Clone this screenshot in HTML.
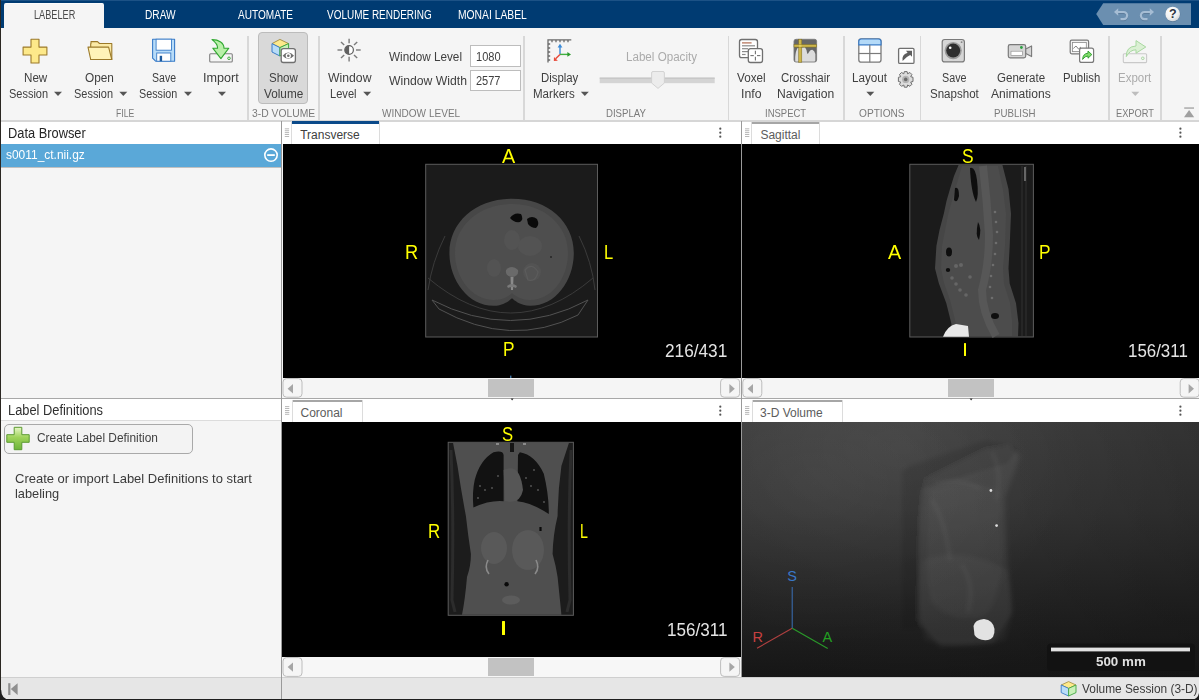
<!DOCTYPE html><html><head><meta charset="utf-8"><style>
html,body{margin:0;padding:0;}
body{width:1199px;height:700px;overflow:hidden;position:relative;background:#f5f5f5;font-family:"Liberation Sans", sans-serif;}
.t{position:absolute;white-space:nowrap;display:block;}
.b{position:absolute;box-sizing:border-box;}
svg{position:absolute;}
</style></head><body>

<div class="b" style="left:0px;top:0px;width:1199px;height:28px;background:#003b72;"></div>
<div class="b" style="left:0px;top:0px;width:1199px;height:1px;background:#1c5286;"></div>
<div class="b" style="left:4px;top:3px;width:100px;height:25px;background:#f5f5f5;border-radius:2px 2px 0 0;border-top:1px solid #fbfbfb;"></div>
<span class="t" style="left:33.75px;top:8.40px;font-size:12px;line-height:14px;color:#4a4a4a;transform:scaleX(0.7635);transform-origin:0 0;font-weight:normal;">LABELER</span>
<span class="t" style="left:144.70px;top:8.40px;font-size:12px;line-height:14px;color:#ffffff;transform:scaleX(0.8449);transform-origin:0 0;font-weight:normal;">DRAW</span>
<span class="t" style="left:238.00px;top:8.40px;font-size:12px;line-height:14px;color:#ffffff;transform:scaleX(0.8390);transform-origin:0 0;font-weight:normal;">AUTOMATE</span>
<span class="t" style="left:327.00px;top:8.40px;font-size:12px;line-height:14px;color:#ffffff;transform:scaleX(0.8312);transform-origin:0 0;font-weight:normal;">VOLUME RENDERING</span>
<span class="t" style="left:458.25px;top:8.40px;font-size:12px;line-height:14px;color:#ffffff;transform:scaleX(0.8591);transform-origin:0 0;font-weight:normal;">MONAI LABEL</span>
<svg style="left:1090px;top:0px" width="109" height="28" viewBox="1090 0 109 28">
<defs><radialGradient id="hg" cx="0.4" cy="0.3" r="0.8"><stop offset="0" stop-color="#ffffff"/><stop offset="0.6" stop-color="#f0f0f0"/><stop offset="1" stop-color="#c8ccd2"/></radialGradient></defs>
<path d="M1096.2 14 L1103.2 3.2 L1191 3.2 L1191 25 L1103.2 25 Z" fill="#6b8fb0"/>
<g fill="none" stroke="#55718e" stroke-width="2.2" opacity="0.6">
<path d="M1117 13 H1123.5 a3.6 3.6 0 0 1 0 7.2 H1120.5"/>
<path d="M1151 13 H1144.5 a3.6 3.6 0 0 0 0 7.2 H1147.5"/>
</g>
<g fill="none" stroke="#a6bdd4" stroke-width="2.2">
<path d="M1117 12 H1123.5 a3.6 3.6 0 0 1 0 7.2 H1120.5"/>
<path d="M1151 12 H1144.5 a3.6 3.6 0 0 0 0 7.2 H1147.5"/>
</g>
<path d="M1114 12 l4.2 -3.8 v7.6 z" fill="#a6bdd4"/>
<path d="M1154 12 l-4.2 -3.8 v7.6 z" fill="#a6bdd4"/>
<circle cx="1172.9" cy="14.6" r="7.4" fill="#4a6480" opacity="0.5"/>
<circle cx="1172.7" cy="14" r="7.3" fill="url(#hg)"/>
<text x="1172.8" y="18.4" font-family="Liberation Sans" font-weight="bold" font-size="12.5" text-anchor="middle" fill="#2e3440">?</text>
</svg>
<div class="b" style="left:0px;top:120px;width:1199px;height:2px;background:#d6d6d6;"></div>
<div class="b" style="left:247.2px;top:36px;width:1.8px;height:84px;background:#d8d8d8;"></div>
<div class="b" style="left:318.2px;top:36px;width:1.8px;height:84px;background:#d8d8d8;"></div>
<div class="b" style="left:523px;top:36px;width:1.8px;height:84px;background:#d8d8d8;"></div>
<div class="b" style="left:727.5px;top:36px;width:1.8px;height:84px;background:#d8d8d8;"></div>
<div class="b" style="left:842.8px;top:36px;width:1.8px;height:84px;background:#d8d8d8;"></div>
<div class="b" style="left:919.5px;top:36px;width:1.8px;height:84px;background:#d8d8d8;"></div>
<div class="b" style="left:1108px;top:36px;width:1.8px;height:84px;background:#d8d8d8;"></div>
<div class="b" style="left:1160.4px;top:36px;width:1.8px;height:84px;background:#d8d8d8;"></div>
<div class="b" style="left:258px;top:32px;width:50px;height:72px;background:#d9d9d9;border:1px solid #bcbcbc;border-radius:4px;"></div>
<span class="t" style="left:23.60px;top:71.00px;font-size:12px;line-height:14px;color:#404040;transform:scaleX(0.9694);transform-origin:0 0;font-weight:normal;">New</span>
<span class="t" style="left:9.40px;top:87.00px;font-size:12px;line-height:14px;color:#404040;transform:scaleX(0.9158);transform-origin:0 0;font-weight:normal;">Session</span>
<span class="t" style="left:85.00px;top:71.00px;font-size:12px;line-height:14px;color:#404040;transform:scaleX(0.9846);transform-origin:0 0;font-weight:normal;">Open</span>
<span class="t" style="left:74.00px;top:87.00px;font-size:12px;line-height:14px;color:#404040;transform:scaleX(0.9134);transform-origin:0 0;font-weight:normal;">Session</span>
<span class="t" style="left:152.00px;top:71.00px;font-size:12px;line-height:14px;color:#404040;transform:scaleX(0.8776);transform-origin:0 0;font-weight:normal;">Save</span>
<span class="t" style="left:138.70px;top:87.00px;font-size:12px;line-height:14px;color:#404040;transform:scaleX(0.8970);transform-origin:0 0;font-weight:normal;">Session</span>
<span class="t" style="left:203.00px;top:71.00px;font-size:12px;line-height:14px;color:#404040;transform:scaleX(1.0498);transform-origin:0 0;font-weight:normal;">Import</span>
<span class="t" style="left:269.10px;top:71.00px;font-size:12px;line-height:14px;color:#404040;transform:scaleX(0.9618);transform-origin:0 0;font-weight:normal;">Show</span>
<span class="t" style="left:263.90px;top:87.00px;font-size:12px;line-height:14px;color:#404040;transform:scaleX(0.9795);transform-origin:0 0;font-weight:normal;">Volume</span>
<span class="t" style="left:327.50px;top:71.00px;font-size:12px;line-height:14px;color:#404040;transform:scaleX(1.0185);transform-origin:0 0;font-weight:normal;">Window</span>
<span class="t" style="left:330.00px;top:87.00px;font-size:12px;line-height:14px;color:#404040;transform:scaleX(0.9271);transform-origin:0 0;font-weight:normal;">Level</span>
<span class="t" style="left:389.40px;top:50.20px;font-size:12px;line-height:14px;color:#404040;transform:scaleX(0.9772);transform-origin:0 0;font-weight:normal;">Window Level</span>
<span class="t" style="left:389.40px;top:74.40px;font-size:12px;line-height:14px;color:#404040;transform:scaleX(1.0171);transform-origin:0 0;font-weight:normal;">Window Width</span>
<span class="t" style="left:540.70px;top:71.00px;font-size:12px;line-height:14px;color:#404040;transform:scaleX(0.9480);transform-origin:0 0;font-weight:normal;">Display</span>
<span class="t" style="left:532.60px;top:87.00px;font-size:12px;line-height:14px;color:#404040;transform:scaleX(0.9623);transform-origin:0 0;font-weight:normal;">Markers</span>
<span class="t" style="left:626.00px;top:50.00px;font-size:12px;line-height:14px;color:#ababab;transform:scaleX(0.9676);transform-origin:0 0;font-weight:normal;">Label Opacity</span>
<span class="t" style="left:736.60px;top:71.00px;font-size:12px;line-height:14px;color:#404040;transform:scaleX(0.9744);transform-origin:0 0;font-weight:normal;">Voxel</span>
<span class="t" style="left:740.70px;top:87.00px;font-size:12px;line-height:14px;color:#404040;transform:scaleX(1.0242);transform-origin:0 0;font-weight:normal;">Info</span>
<span class="t" style="left:781.30px;top:71.00px;font-size:12px;line-height:14px;color:#404040;transform:scaleX(0.9543);transform-origin:0 0;font-weight:normal;">Crosshair</span>
<span class="t" style="left:777.40px;top:87.00px;font-size:12px;line-height:14px;color:#404040;transform:scaleX(1.0106);transform-origin:0 0;font-weight:normal;">Navigation</span>
<span class="t" style="left:852.20px;top:71.00px;font-size:12px;line-height:14px;color:#404040;transform:scaleX(0.9716);transform-origin:0 0;font-weight:normal;">Layout</span>
<span class="t" style="left:941.50px;top:71.00px;font-size:12px;line-height:14px;color:#404040;transform:scaleX(0.8959);transform-origin:0 0;font-weight:normal;">Save</span>
<span class="t" style="left:929.70px;top:87.00px;font-size:12px;line-height:14px;color:#404040;transform:scaleX(0.9623);transform-origin:0 0;font-weight:normal;">Snapshot</span>
<span class="t" style="left:996.70px;top:71.00px;font-size:12px;line-height:14px;color:#404040;transform:scaleX(0.9615);transform-origin:0 0;font-weight:normal;">Generate</span>
<span class="t" style="left:990.80px;top:87.00px;font-size:12px;line-height:14px;color:#404040;transform:scaleX(1.0057);transform-origin:0 0;font-weight:normal;">Animations</span>
<span class="t" style="left:1063.00px;top:71.00px;font-size:12px;line-height:14px;color:#404040;transform:scaleX(0.9451);transform-origin:0 0;font-weight:normal;">Publish</span>
<span class="t" style="left:1118.20px;top:71.00px;font-size:12px;line-height:14px;color:#ababab;transform:scaleX(0.9573);transform-origin:0 0;font-weight:normal;">Export</span>
<span class="t" style="left:115.50px;top:107.20px;font-size:10.5px;line-height:12px;color:#7a7a7a;transform:scaleX(0.8230);transform-origin:0 0;font-weight:normal;">FILE</span>
<span class="t" style="left:251.80px;top:107.20px;font-size:10.5px;line-height:12px;color:#7a7a7a;transform:scaleX(0.9848);transform-origin:0 0;font-weight:normal;">3-D VOLUME</span>
<span class="t" style="left:382.00px;top:107.20px;font-size:10.5px;line-height:12px;color:#7a7a7a;transform:scaleX(0.9574);transform-origin:0 0;font-weight:normal;">WINDOW LEVEL</span>
<span class="t" style="left:605.80px;top:107.20px;font-size:10.5px;line-height:12px;color:#7a7a7a;transform:scaleX(0.9157);transform-origin:0 0;font-weight:normal;">DISPLAY</span>
<span class="t" style="left:765.20px;top:107.20px;font-size:10.5px;line-height:12px;color:#7a7a7a;transform:scaleX(0.9032);transform-origin:0 0;font-weight:normal;">INSPECT</span>
<span class="t" style="left:859.20px;top:107.20px;font-size:10.5px;line-height:12px;color:#7a7a7a;transform:scaleX(0.9649);transform-origin:0 0;font-weight:normal;">OPTIONS</span>
<span class="t" style="left:994.30px;top:107.20px;font-size:10.5px;line-height:12px;color:#7a7a7a;transform:scaleX(0.9237);transform-origin:0 0;font-weight:normal;">PUBLISH</span>
<span class="t" style="left:1116.30px;top:107.20px;font-size:10.5px;line-height:12px;color:#7a7a7a;transform:scaleX(0.8817);transform-origin:0 0;font-weight:normal;">EXPORT</span>
<div class="b" style="left:470px;top:45px;width:50.5px;height:21.5px;background:#fff;border:1px solid #bdbdbd;"></div>
<div class="b" style="left:470px;top:69.6px;width:50.5px;height:21.5px;background:#fff;border:1px solid #bdbdbd;"></div>
<span class="t" style="left:476.00px;top:50.20px;font-size:12px;line-height:14px;color:#404040;transform:scaleX(0.9213);transform-origin:0 0;font-weight:normal;">1080</span>
<span class="t" style="left:475.50px;top:74.40px;font-size:12px;line-height:14px;color:#404040;transform:scaleX(0.9176);transform-origin:0 0;font-weight:normal;">2577</span>
<svg style="left:0;top:0" width="1199" height="125" viewBox="0 0 1199 125">
<!-- New session plus -->
<path d="M31 39.2 h8 v7.9 h7.9 v7.9 h-7.9 v8 h-8 v-8 h-7.9 v-7.9 h7.9 z" fill="#fde98a" stroke="#9c7a2a" stroke-width="1.1" stroke-linejoin="round"/>
<!-- folder -->
<path d="M90.7 59.5 V43.5 h0.3 v-1.9 h6.5 l2 1.9 h12.3 v16 z" fill="#fbeaa6" stroke="#9c7a2a" stroke-width="1.1" stroke-linejoin="round"/>
<path d="M88 47.1 H108.6 L111.8 59.5 H90.7 Z" fill="#fff3b8" stroke="#9c7a2a" stroke-width="1.1" stroke-linejoin="round"/>
<!-- floppy -->
<path d="M152.6 39.2 H174.6 V61.2 H155.6 L152.6 58.2 Z" fill="#b8dcf8" stroke="#3a7cc8" stroke-width="1.1" stroke-linejoin="round"/>
<rect x="156.1" y="39.2" width="15.4" height="11" fill="#ffffff" stroke="#3a7cc8" stroke-width="0.9"/>
<rect x="156.7" y="53" width="14.1" height="8.2" fill="#ffffff" stroke="#3a7cc8" stroke-width="0.9"/>
<rect x="159.7" y="55.8" width="2.4" height="5.4" fill="#1d5a9c"/>
<!-- import -->
<rect x="209.7" y="53.7" width="22.6" height="8.3" rx="1" fill="#f5f5f5" stroke="#808080" stroke-width="1.1"/>
<circle cx="229" cy="58.3" r="1.3" fill="none" stroke="#40b040" stroke-width="1"/>
<path d="M212 39.6 C219 39.6 224 43 224 48.2 H228.8 L220.9 58.6 L212.8 48.2 H217.6 C217.6 44.6 215.5 42 212 39.6 Z" fill="#b8f0a8" stroke="#30a830" stroke-width="1.1" stroke-linejoin="round"/>
<!-- show volume cube + eye -->
<path d="M279.9 39.4 L288.6 43.6 L279.9 47.6 L272 43.6 Z" fill="#fde98a" stroke="#a08a40" stroke-width="0.9" stroke-linejoin="round"/>
<path d="M272 43.6 L279.9 47.6 V56 L272 52 Z" fill="#b8dcf8" stroke="#3a7cc8" stroke-width="1" stroke-linejoin="round"/>
<path d="M288.6 43.6 L279.9 47.6 V56 L288.6 52 Z" fill="#c8f0b8" stroke="#40a840" stroke-width="1" stroke-linejoin="round"/>
<rect x="281.2" y="48.6" width="14.2" height="13.9" rx="2.2" fill="#ffffff" stroke="#707070" stroke-width="1.3"/>
<path d="M282.6 55.7 Q288.2 49.4 294 55.7 Q288.2 62 282.6 55.7 Z" fill="#6e6e6e"/>
<circle cx="288.3" cy="55.7" r="2.6" fill="#ffffff"/>
<circle cx="288.3" cy="55.7" r="1.3" fill="#6e6e6e"/>
<!-- sun contrast -->
<g stroke="#7a7a7a" stroke-width="1.4" stroke-linecap="butt">
<line x1="349.1" y1="38.8" x2="349.1" y2="43.2"/><line x1="349.1" y1="56.8" x2="349.1" y2="61.4"/>
<line x1="337.5" y1="50" x2="342.2" y2="50"/><line x1="356" y1="50" x2="360.7" y2="50"/>
<line x1="341" y1="41.9" x2="344.2" y2="45.1"/><line x1="354" y1="54.9" x2="357.2" y2="58.1"/>
<line x1="357.2" y1="41.9" x2="354" y2="45.1"/><line x1="344.2" y1="54.9" x2="341" y2="58.1"/>
</g>
<circle cx="349.1" cy="50" r="4.3" fill="#ffffff" stroke="#606060" stroke-width="1.2"/>
<path d="M349.1 45.7 A4.3 4.3 0 0 0 349.1 54.3 Z" fill="#606060"/>
<!-- display markers -->
<g fill="none" stroke="#6a6a6a" stroke-width="1.3">
<path d="M548 62.6 V39.9 H571.3"/>
<path d="M552 40 v2.2 M556 40 v2.2 M560 40 v2.2 M564 40 v2.2 M568 40 v2.2"/>
<path d="M548 44 h2.2 M548 48 h2.2 M548 52 h2.2 M548 56 h2.2 M548 60 h2.2"/>
</g>
<line x1="560" y1="54.4" x2="560" y2="46" stroke="#3a8ad8" stroke-width="1.4"/>
<path d="M557.6 47.4 L560 43.8 L562.4 47.4 Z" fill="#3a8ad8"/>
<line x1="560" y1="54.4" x2="568.6" y2="54.4" stroke="#40b040" stroke-width="1.4"/>
<path d="M567.4 52 L571 54.4 L567.4 56.8 Z" fill="#2a9a2a"/>
<line x1="560" y1="54.4" x2="555.6" y2="58.8" stroke="#e84a3a" stroke-width="1.4"/>
<path d="M554 57 L553.8 61 L557.8 60.8 Z" fill="#e84a3a"/>
<!-- slider -->
<rect x="599.7" y="77.6" width="115" height="5.6" fill="#d4d4d4"/>
<rect x="599.7" y="77.6" width="115" height="1.2" fill="#c4c4c4"/>
<path d="M651.6 73 Q651.6 71.5 653 71.5 H663 Q664.4 71.5 664.4 73 V83 L658 88.4 L651.6 83 Z" fill="#ececec" stroke="#cfcfcf" stroke-width="0.9"/>
<!-- voxel info -->
<rect x="739.5" y="39.5" width="18" height="18.2" rx="2.2" fill="#ffffff" stroke="#707070" stroke-width="1.3"/>
<g stroke-width="1.2"><line x1="742" y1="42.9" x2="751.6" y2="42.9" stroke="#b06a50"/>
<line x1="742" y1="45.8" x2="755" y2="45.8" stroke="#8a8a8a"/>
<line x1="742" y1="48.7" x2="748" y2="48.7" stroke="#8a8a8a"/>
<line x1="742" y1="51.6" x2="748" y2="51.6" stroke="#8a8a8a"/>
<line x1="742" y1="54.5" x2="745.6" y2="54.5" stroke="#8a8a8a"/></g>
<rect x="748.3" y="48.7" width="14.2" height="13.8" rx="2.2" fill="#ffffff" stroke="#707070" stroke-width="1.3"/>
<g stroke="#707070" stroke-width="1.1"><line x1="755.4" y1="50.8" x2="755.4" y2="54.2"/><line x1="755.4" y1="56.8" x2="755.4" y2="60.4"/>
<line x1="750.4" y1="55.6" x2="753.8" y2="55.6"/><line x1="757" y1="55.6" x2="760.4" y2="55.6"/></g>
<!-- crosshair navigation -->
<rect x="794" y="39.3" width="22.6" height="22.7" rx="2" fill="#676767"/>
<path d="M795.2 62 V57 Q795.6 51 797.6 48 L805 47.2 Q806.5 49 807.2 53.4 Q808 54.5 809 52 Q810.5 49.6 812.3 49.8 Q814.5 50.5 815.4 54 V60.6 Q815.4 62 814 62 Z" fill="#dcdcdc"/>
<rect x="794" y="39.3" width="22.6" height="22.7" rx="2" fill="none" stroke="#7a7a7a" stroke-width="0.9"/>
<rect x="798.7" y="39.2" width="3.1" height="23" fill="#cdb54a" stroke="#7a6a20" stroke-width="0.5"/>
<rect x="794" y="44.5" width="22.6" height="2.6" fill="#cdb54a" stroke="#7a6a20" stroke-width="0.5"/>
<rect x="799" y="44.8" width="2.5" height="2" fill="#e0cc60"/>
<!-- layout -->
<rect x="858.8" y="39" width="22.2" height="23.2" rx="2.5" fill="#ffffff" stroke="#7a7a7a" stroke-width="1.3"/>
<path d="M858.8 44.8 V41.5 Q858.8 39 861.3 39 H878.5 Q881 39 881 41.5 V44.8 Z" fill="#b4daf8" stroke="#3a7cc8" stroke-width="1.2"/>
<line x1="869.8" y1="44.8" x2="869.8" y2="62.2" stroke="#7a7a7a" stroke-width="1.2"/>
<line x1="858.8" y1="53.5" x2="881" y2="53.5" stroke="#7a7a7a" stroke-width="1.2"/>
<!-- popout -->
<rect x="898.6" y="48.4" width="15.4" height="15" rx="1.2" fill="#ffffff" stroke="#707070" stroke-width="1.3"/>
<path d="M902.6 61 Q901.4 54.6 907.6 52.8 L906 50.8 H912 V56.8 L910.2 55 Q906.4 56.6 902.6 61 Z" fill="#5e5e5e"/>
<!-- gear -->
<g transform="translate(905.7 79.4)">
<path d="M-1.4 -7.8 H1.4 L1.9 -5.6 L4.2 -6.9 L6.2 -4.9 L5 -2.7 L7.3 -2.1 V2.1 L5 2.7 L6.2 4.9 L4.2 6.9 L1.9 5.6 L1.4 7.8 H-1.4 L-1.9 5.6 L-4.2 6.9 L-6.2 4.9 L-5 2.7 L-7.3 2.1 V-2.1 L-5 -2.7 L-6.2 -4.9 L-4.2 -6.9 L-1.9 -5.6 Z" fill="#dcdcdc" stroke="#6e6e6e" stroke-width="1" stroke-linejoin="round"/>
<circle r="3.6" fill="#b4b4b4"/>
<circle r="1.8" fill="#6a6a6a"/>
</g>
<!-- snapshot -->
<rect x="942.2" y="39.5" width="22.2" height="22.4" rx="2.5" fill="#d6d6d6" stroke="#7a7a7a" stroke-width="1.2"/>
<circle cx="953.2" cy="50.6" r="8.6" fill="#9a9a9a"/>
<circle cx="953.2" cy="50.6" r="7" fill="#2e2e2e"/>
<circle cx="950.2" cy="47.8" r="1.3" fill="#ffffff"/>
<circle cx="961.6" cy="42.2" r="0.9" fill="#888"/>
<!-- camcorder -->
<rect x="1008.3" y="44.6" width="17.4" height="13.3" rx="1.8" fill="#d6d6d6" stroke="#7a7a7a" stroke-width="1.2"/>
<path d="M1025.8 49 L1031.6 45.9 V56.6 L1025.8 53.5 Z" fill="#d6d6d6" stroke="#7a7a7a" stroke-width="1.1" stroke-linejoin="round"/>
<rect x="1011" y="51.2" width="11.3" height="4.1" fill="#ffffff" stroke="#8a8a8a" stroke-width="0.6"/>
<circle cx="1021.4" cy="47.5" r="1.4" fill="#2aa040"/>
<!-- publish -->
<rect x="1070.2" y="40.2" width="18.4" height="13.6" rx="1.5" fill="#f2f2f2" stroke="#7a7a7a" stroke-width="1.2"/>
<rect x="1072.5" y="42.4" width="13.8" height="9.2" fill="#ffffff" stroke="#8a8a8a" stroke-width="0.8"/>
<path d="M1073.3 48.5 L1076 46 L1078.5 49 L1081 47" fill="none" stroke="#777" stroke-width="0.9"/>
<rect x="1079.6" y="48.2" width="14" height="14.2" rx="2" fill="#ffffff" stroke="#7a7a7a" stroke-width="1.2"/>
<path d="M1082.6 59.4 Q1083 53.4 1088 53.2 V51 L1091.8 54.6 L1088 58.2 V56 Q1085 56 1082.6 59.4 Z" fill="#7fdc6a" stroke="#2a9a2a" stroke-width="0.9" stroke-linejoin="round"/>
<!-- export (disabled) -->
<rect x="1123.3" y="53.8" width="23.3" height="8.8" rx="1" fill="#f5f5f5" stroke="#c9c9c9" stroke-width="1.1"/>
<circle cx="1142.8" cy="58.3" r="1.3" fill="none" stroke="#a8d8a0" stroke-width="1"/>
<path d="M1126.3 56.6 Q1126 46.5 1136 46 V40.6 L1145.8 47 L1136 53.2 V49.8 Q1130 49.8 1126.3 56.6 Z" fill="#dbf0d4" stroke="#a8d8a0" stroke-width="1" stroke-linejoin="round"/>
<!-- dropdown arrows -->
<g fill="#555555">
<path d="M54.0 91.8 H62.0 L58.0 95.9 Z"/>
<path d="M119.3 91.8 H127.3 L123.3 95.9 Z"/>
<path d="M184.0 91.8 H192.0 L188.0 95.9 Z"/>
<path d="M218.0 91.8 H226.0 L222.0 95.9 Z"/>
<path d="M363.2 91.8 H371.2 L367.2 95.9 Z"/>
<path d="M580.8 91.8 H588.8 L584.8 95.9 Z"/>
<path d="M866.3 91.8 H874.3 L870.3 95.9 Z"/>
</g>
<path d="M1131.3 91.8 H1139.3 L1135.3 95.9 Z" fill="#bdbdbd"/>
<!-- collapse -->
<rect x="1184.2" y="107.4" width="9.8" height="1.3" fill="#a0a0a0"/>
<path d="M1184 117.3 L1189.1 110 L1194.2 117.3 Z" fill="#a0a0a0"/>
</svg>

<div class="b" style="left:0px;top:122px;width:281px;height:22px;background:#ffffff;"></div>
<span class="t" style="left:7.50px;top:125.00px;font-size:14px;line-height:16px;color:#262626;transform:scaleX(0.9173);transform-origin:0 0;font-weight:normal;">Data Browser</span>
<div class="b" style="left:0px;top:144px;width:281px;height:23.5px;background:#5aa8d8;"></div>
<div class="b" style="left:0px;top:166.6px;width:281px;height:1.6px;background:#c0c0c0;"></div>
<span class="t" style="left:6.00px;top:148.40px;font-size:12.5px;line-height:14px;color:#ffffff;transform:scaleX(0.9556);transform-origin:0 0;font-weight:normal;">s0011_ct.nii.gz</span>
<svg style="left:262px;top:146px" width="18" height="18" viewBox="262 146 18 18"><circle cx="271" cy="155.1" r="6.2" fill="none" stroke="#fff" stroke-width="1.6"/><rect x="267.2" y="154.2" width="7.6" height="1.8" fill="#fff"/></svg>
<div class="b" style="left:0px;top:398px;width:281px;height:1.2px;background:#a8a8a8;"></div>
<div class="b" style="left:0px;top:399px;width:281px;height:21px;background:#ffffff;"></div>
<div class="b" style="left:0px;top:420px;width:281px;height:1.2px;background:#dcdcdc;"></div>
<span class="t" style="left:7.50px;top:402.00px;font-size:14px;line-height:16px;color:#303030;transform:scaleX(0.9177);transform-origin:0 0;font-weight:normal;">Label Definitions</span>
<div class="b" style="left:3.5px;top:423.5px;width:189.5px;height:30px;background:#f3f3f3;border:1px solid #a9a9a9;border-radius:5px;"></div>
<svg style="left:5px;top:425px" width="28" height="28" viewBox="5 425 28 28">
<defs><linearGradient id="gp" x1="0" y1="0" x2="0" y2="1"><stop offset="0" stop-color="#e8f8c8"/><stop offset="0.45" stop-color="#9fd35a"/><stop offset="1" stop-color="#6db43a"/></linearGradient></defs>
<path d="M14.2 427.3 h7.6 v7.4 h7.4 v7.6 h-7.4 v7.4 h-7.6 v-7.4 h-7.4 v-7.6 h7.4 z" fill="url(#gp)" stroke="#5a9a30" stroke-width="1"/>
</svg>
<span class="t" style="left:36.50px;top:431.20px;font-size:12.5px;line-height:14px;color:#404040;transform:scaleX(0.9508);transform-origin:0 0;font-weight:normal;">Create Label Definition</span>
<span class="t" style="left:15.00px;top:470.80px;font-size:13.5px;line-height:15px;color:#3a3a3a;transform:scaleX(0.9621);transform-origin:0 0;font-weight:normal;">Create or import Label Definitions to start</span>
<span class="t" style="left:15.30px;top:486.40px;font-size:13.5px;line-height:15px;color:#3a3a3a;transform:scaleX(0.9498);transform-origin:0 0;font-weight:normal;">labeling</span>
<!-- Transverse -->
<div class="b" style="left:282.3px;top:122px;width:458.7px;height:22px;background:#fff;"></div>
<div class="b" style="left:291px;top:121px;width:89px;height:23px;background:#fff;border-left:1px solid #dcdcdc;border-right:1px solid #dcdcdc;"></div>
<div class="b" style="left:292px;top:121px;width:87px;height:3px;background:#0b4a8a;"></div>
<span class="t" style="left:300.2px;top:128.54px;font-size:12px;line-height:12px;color:#404040;">Transverse</span>
<div class="b" style="left:283px;top:144px;width:458px;height:234px;background:#000;"></div>
<div class="b" style="left:282.3px;top:378px;width:458.7px;height:20px;background:#f5f5f5;"></div>
<div class="b" style="left:488px;top:379px;width:46px;height:17.5px;background:#c2c2c2;"></div>

<!-- Sagittal -->
<div class="b" style="left:742.3px;top:122px;width:457px;height:22px;background:#fff;"></div>
<div class="b" style="left:751px;top:121.5px;width:69px;height:22.5px;background:#fff;border-left:1px solid #dcdcdc;border-right:1px solid #dcdcdc;"></div>
<div class="b" style="left:752px;top:121.5px;width:67px;height:2.3px;background:#a6a6a6;"></div>
<span class="t" style="left:760.4px;top:128.54px;font-size:12px;line-height:12px;color:#5c5c5c;">Sagittal</span>
<div class="b" style="left:742.3px;top:144px;width:457px;height:234px;background:#000;"></div>
<div class="b" style="left:742.3px;top:378px;width:457px;height:20px;background:#f5f5f5;"></div>
<div class="b" style="left:948px;top:379px;width:46px;height:17.5px;background:#c2c2c2;"></div>

<div class="b" style="left:282.3px;top:397.8px;width:917px;height:1.3px;background:#a8a8a8;"></div>

<!-- Coronal -->
<div class="b" style="left:282.3px;top:399px;width:458.7px;height:23px;background:#fff;"></div>
<div class="b" style="left:291.5px;top:399.5px;width:71px;height:22.5px;background:#fff;border-left:1px solid #dcdcdc;border-right:1px solid #dcdcdc;"></div>
<div class="b" style="left:292.5px;top:399.7px;width:69px;height:2.2px;background:#a6a6a6;"></div>
<span class="t" style="left:300.5px;top:406.64px;font-size:12px;line-height:12px;color:#5c5c5c;">Coronal</span>
<div class="b" style="left:282.3px;top:422px;width:458.7px;height:235px;background:#000;"></div>
<div class="b" style="left:282.3px;top:657px;width:458.7px;height:20px;background:#f7f7f7;"></div>
<div class="b" style="left:488px;top:658px;width:46px;height:17.5px;background:#c2c2c2;"></div>

<!-- 3-D Volume -->
<div class="b" style="left:742.3px;top:399px;width:457px;height:23px;background:#fff;"></div>
<div class="b" style="left:751.5px;top:399.5px;width:91px;height:22.5px;background:#fff;border-left:1px solid #dcdcdc;border-right:1px solid #dcdcdc;"></div>
<div class="b" style="left:752.5px;top:399.7px;width:89px;height:2.2px;background:#a6a6a6;"></div>
<span class="t" style="left:760px;top:406.64px;font-size:12px;line-height:12px;color:#5c5c5c;">3-D Volume</span>
<div class="b" style="left:742.3px;top:422px;width:457px;height:255px;background:radial-gradient(ellipse 55% 65% at 16% 24%, rgba(255,255,255,0.055), rgba(255,255,255,0) 100%),linear-gradient(to right, rgba(0,0,0,0) 35%, rgba(0,0,0,0.10) 100%),linear-gradient(to bottom,#444444 0%,#3b3b3b 35%,#2a2a2a 72%,#1e1e1e 100%);"></div>

<svg style="left:0;top:0" width="1199" height="700" viewBox="0 0 1199 700">
<!-- grips -->
<g fill="#b0b0b0">
<rect x="284.8" y="128.4" width="4.3" height="0.9"/><rect x="284.8" y="130.3" width="4.3" height="0.9"/><rect x="284.8" y="132.2" width="4.3" height="0.9"/><rect x="284.8" y="134.1" width="4.3" height="0.9"/><rect x="284.8" y="136" width="4.3" height="0.9"/>
<rect x="745" y="128.4" width="4.3" height="0.9"/><rect x="745" y="130.3" width="4.3" height="0.9"/><rect x="745" y="132.2" width="4.3" height="0.9"/><rect x="745" y="134.1" width="4.3" height="0.9"/><rect x="745" y="136" width="4.3" height="0.9"/>
<rect x="285" y="406.2" width="4.3" height="0.9"/><rect x="285" y="408.1" width="4.3" height="0.9"/><rect x="285" y="410" width="4.3" height="0.9"/><rect x="285" y="411.9" width="4.3" height="0.9"/><rect x="285" y="413.8" width="4.3" height="0.9"/>
<rect x="745" y="406.2" width="4.3" height="0.9"/><rect x="745" y="408.1" width="4.3" height="0.9"/><rect x="745" y="410" width="4.3" height="0.9"/><rect x="745" y="411.9" width="4.3" height="0.9"/><rect x="745" y="413.8" width="4.3" height="0.9"/>
</g>
<!-- kebab dots -->
<g fill="#555">
<circle cx="720.3" cy="128.7" r="1.1"/><circle cx="720.3" cy="132.7" r="1.1"/><circle cx="720.3" cy="136.7" r="1.1"/>
<circle cx="1180.4" cy="128.7" r="1.1"/><circle cx="1180.4" cy="132.7" r="1.1"/><circle cx="1180.4" cy="136.7" r="1.1"/>
<circle cx="720.3" cy="406.7" r="1.1"/><circle cx="720.3" cy="410.7" r="1.1"/><circle cx="720.3" cy="414.7" r="1.1"/>
<circle cx="1180.4" cy="406.7" r="1.1"/><circle cx="1180.4" cy="410.7" r="1.1"/><circle cx="1180.4" cy="414.7" r="1.1"/>
</g>
<!-- scroll buttons -->
<g fill="#f5f5f5" stroke="#bdbdbd" stroke-width="1">
<rect x="283" y="378.6" width="19" height="18.6" rx="3.5"/>
<rect x="720.6" y="378.6" width="19" height="18.6" rx="3.5"/>
<rect x="742.8" y="378.6" width="19" height="18.6" rx="3.5"/>
<rect x="1180.2" y="378.6" width="19" height="18.6" rx="3.5"/>
<rect x="283" y="657.6" width="19" height="18.8" rx="3.5"/>
<rect x="720.6" y="657.6" width="19" height="18.8" rx="3.5"/>
</g>
<g fill="#a6a6a6">
<path d="M293 384 V393.5 L287.6 388.7 Z"/>
<path d="M729.4 384 V393.5 L734.8 388.7 Z"/>
<path d="M753 384 V393.5 L747.6 388.7 Z"/>
<path d="M1188.6 384 V393.5 L1194 388.7 Z"/>
<path d="M293 662.4 V671.8 L287.6 667.1 Z"/>
<path d="M729.4 662.4 V671.8 L734.8 667.1 Z"/>
</g>
<!-- little ticks on scroll -->
<rect x="510.3" y="375.6" width="1" height="2.4" fill="#5aa0e0"/>
<path d="M510.6 398.6 H513.6 L512.1 400.4 Z" fill="#333"/>
<path d="M969.6 398.6 H972.6 L971.1 400.4 Z" fill="#333"/>

<!-- ===== Transverse CT ===== -->
<rect x="425.7" y="164.3" width="171.8" height="172.7" fill="#1b1b1b" stroke="#5c5c5c" stroke-width="1"/>
<g fill="none" stroke="#525252" stroke-width="1">
<path d="M432 300 Q511 341 588 300"/>
<path d="M439 309 Q511 349 578 315"/>
<path d="M432 300 L439 309 M588 300 L578 315"/>
</g>
<g fill="none" stroke="#3e3e3e" stroke-width="0.9">
<path d="M428 278 Q511 348 593 278"/>
<path d="M445 236 Q432 262 428 290"/><path d="M579 236 Q592 262 595 290"/>
</g>
<path d="M512 198.8 C548 198.8 573.8 222 573.8 253 C573.8 280 556 306 530 305.8 C520 305.8 514 300 512 298.3 C510 300 504 305.8 494 305.8 C468 306 449.4 280 449.4 253 C449.4 222 476 198.8 512 198.8 Z" fill="#474747"/>
<path d="M512 204 C544 204 568 225 568 253 C568 278 552 300 530 300 C520 300 514 295 512 293 C510 295 504 300 494 300 C472 300 455 278 455 253 C455 225 480 204 512 204 Z" fill="#4e4e4e"/>
<g fill="#535353">
<ellipse cx="530" cy="246" rx="12" ry="10"/>
<ellipse cx="494" cy="268" rx="7" ry="9"/>
<ellipse cx="532" cy="272" rx="9" ry="9"/>
<ellipse cx="512" cy="240" rx="8" ry="10"/>
</g>
<path d="M525 270 Q532 262 538 272 Q536 282 528 280 Z" fill="none" stroke="#5c5c5c" stroke-width="1.2"/>
<path d="M506 270 Q512 264 518 270 Q519 276 512 277 Q505 276 506 270 Z" fill="#6a6a6a"/>
<path d="M510.5 277 H513.5 L513 290 H511 Z" fill="#8a8a8a"/>
<path d="M507 286 Q512 282 517 286 L516 288 Q512 286 508 288 Z" fill="#7a7a7a"/>
<path d="M510 218 Q514 212 521 214 Q524 219 520 222 Q514 223 510 218 Z" fill="#0a0a0a"/>
<path d="M527 219 Q532 215 537 219 Q540 225 536 228 Q531 228 528 224 Z" fill="#0a0a0a"/>
<circle cx="551" cy="257" r="0.8" fill="#0a0a0a"/>

<!-- ===== Sagittal CT ===== -->
<rect x="909.8" y="164.3" width="123.6" height="172.7" fill="#1b1b1b" stroke="#5c5c5c" stroke-width="1"/>
<path d="M958.8 164.5 L954 176 L950 189 L946.5 201 L943.8 213.7 L939.5 230 L936.4 246 L935 268.5 L938.9 283.4 L946.3 303.3 L951.3 323.2 L953 336.8 L1018 336.8 L1018.5 323.2 L1016 303.3 L1009.7 283.4 L1008.5 268.5 L1009.7 246 L1011 213.7 L1008.5 189 L1002.3 164.5 Z" fill="#464646"/>
<path d="M962 166 L955 190 L948 215 L942 246 L941 268 L944 283 L950 300 L955 320 L958 336 L1012 336 L1012 320 L1010 303 L1004 284 L1003 268 L1005 246 L1006 214 L1003 190 L998 166 Z" fill="#4c4c4c"/>
<path d="M983 166 Q987 200 989 235 Q989 265 982 290 Q982 312 996 336" fill="none" stroke="#575757" stroke-width="8"/>
<g fill="#6e6e6e">
<circle cx="995" cy="212" r="1.3"/><circle cx="996" cy="222" r="1.3"/><circle cx="997" cy="232" r="1.3"/><circle cx="996" cy="243" r="1.3"/><circle cx="995" cy="254" r="1.3"/><circle cx="993" cy="265" r="1.3"/><circle cx="991" cy="276" r="1.3"/><circle cx="990" cy="287" r="1.3"/><circle cx="992" cy="298" r="1.3"/>
</g>
<g fill="#0e0e0e">
<path d="M970 168 Q975 166 977 180 Q979 196 976 202 Q971 192 970 168 Z"/>
<path d="M955 188 Q959 186 959 196 Q957 204 954 200 Z"/>
<path d="M978 222 Q982 228 979 240 Q975 236 978 222 Z"/>
<ellipse cx="949" cy="252" rx="3" ry="4.5"/>
<ellipse cx="948" cy="270" rx="2.2" ry="2"/>
<ellipse cx="995" cy="316" rx="4" ry="3"/>
</g>
<g fill="#666"><circle cx="956" cy="266" r="2"/><circle cx="961" cy="265" r="2"/><circle cx="952" cy="278" r="1.8"/><circle cx="956" cy="284" r="1.8"/><circle cx="960" cy="290" r="1.8"/><circle cx="966" cy="295" r="1.8"/><circle cx="970" cy="277" r="1.8"/></g>
<path d="M1022 166 V336 M1026 166 V336" stroke="#333" stroke-width="1"/>
<rect x="1024" y="167" width="2" height="14" fill="#666"/>
<path d="M943 336.8 Q947 326 956 324 L968 326 L969 336.8 Z" fill="#e8e8e8"/>

<!-- ===== Coronal CT ===== -->
<rect x="448.2" y="442.3" width="125.2" height="173" fill="#1c1c1c" stroke="#5c5c5c" stroke-width="1"/>
<path d="M453 442.8 H569 L561.4 466 Q558 490 557.6 516 Q553 535 552.6 554 Q556 566 557.6 577 Q560 600 561.4 614.8 H462 Q465 600 467 577 Q471 566 470.9 554 Q468 535 465.9 516 Q461 490 457.5 466 Z" fill="#4f4f4f"/>
<path d="M451 450 Q454 520 452 600 L455 612" fill="none" stroke="#2c2c2c" stroke-width="3"/>
<path d="M571 450 Q568 520 570 600 L567 612" fill="none" stroke="#2c2c2c" stroke-width="3"/>
<path d="M493.5 452.3 Q503 450 503.6 455 L503.6 501.3 Q490 500 473.4 507.6 Q472 492 474.7 480 Q480 460 493.5 452.3 Z" fill="#121212"/>
<path d="M519.9 452.3 Q535 455 543.8 473.7 Q549 495 548.8 514 Q532 503 517.4 501.3 L518 455 Z" fill="#121212"/>
<g fill="#6a6a6a" opacity="0.8">
<circle cx="480" cy="486" r="0.9"/><circle cx="485" cy="490" r="0.9"/><circle cx="492" cy="488" r="0.9"/><circle cx="498" cy="476" r="0.9"/><circle cx="478" cy="498" r="0.9"/>
<circle cx="526" cy="478" r="0.9"/><circle cx="531" cy="486" r="0.9"/><circle cx="538" cy="490" r="0.9"/><circle cx="534" cy="470" r="0.9"/><circle cx="544" cy="502" r="0.9"/>
</g>
<path d="M503.6 470 Q520 462 523 490 Q520 505 505 501 Z" fill="#565656"/>
<g fill="#5a5a5a" opacity="0.9">
<ellipse cx="528" cy="550" rx="16" ry="20"/><ellipse cx="494" cy="548" rx="13" ry="16"/>
</g>
<path d="M488 560 Q484 568 489 574 M536 560 Q540 568 535 574" fill="none" stroke="#8a8a8a" stroke-width="1.6"/>
<ellipse cx="511" cy="600" rx="9" ry="4.5" fill="#5c5c5c"/>
<circle cx="506.6" cy="584.3" r="2.2" fill="#0a0a0a"/>
<rect x="539.4" y="527" width="2.2" height="4" fill="#0a0a0a"/>
<rect x="496" y="443" width="3" height="2" fill="#8a8a8a"/><rect x="523" y="443" width="3" height="2" fill="#8a8a8a"/>
<path d="M510 443 h4 v9 h-4 z" fill="#151515"/>
</svg>

<!-- 3D volume content -->
<svg style="left:742px;top:422px" width="457" height="255" viewBox="742 422 457 255">
<defs>
<radialGradient id="vg" cx="0.35" cy="0.1" r="0.9"><stop offset="0" stop-color="#000" stop-opacity="0"/><stop offset="1" stop-color="#000" stop-opacity="0.25"/></radialGradient>
<filter id="bl" x="-20%" y="-20%" width="140%" height="140%"><feGaussianBlur stdDeviation="2"/></filter>
</defs>
<rect x="742" y="422" width="457" height="255" fill="url(#vg)"/>
<g filter="url(#bl)">
<path d="M902 471.5 L909.7 465.8 L985.9 440.3 L1018.3 448.7 L1008.8 463.9 L921.1 490.6 L921.1 627.8 L902 629.7 Z" fill="#000000" opacity="0.10"/>
<path d="M925 479 L955.4 463.9 L985.9 448.7 L1008.8 444.9 L1020.2 456.3 L1005 498.2 L1008.8 574.4 L1012.6 612.5 L993.5 643 L940.2 646.8 L917.3 620.2 L919.2 536.3 Z" fill="#ffffff" opacity="0.055"/>
<path d="M930 490 Q960 478 1000 490 L1003 560 Q1000 600 985 615 Q950 625 930 600 Q924 560 930 490 Z" fill="#ffffff" opacity="0.03"/>
<path d="M922 560 Q960 545 1008 570 Q1016 610 1005 640 Q965 652 925 640 Q916 600 922 560 Z" fill="#ffffff" opacity="0.035"/>
</g>
<g fill="none" stroke="#ffffff" stroke-opacity="0.08" stroke-width="2" filter="url(#bl)">
<path d="M935 483 Q960 478 980 488"/><path d="M992 452 Q1002 470 997 500"/>
<path d="M932 500 Q945 520 950 560"/><path d="M962 565 Q975 585 968 612"/>
</g>
<path d="M973.5 626 Q975 619.5 984 619 Q993 620 994.5 629 Q995 638.5 988 640 Q978 641 974.5 635 Z" fill="#e2e2e2"/>
<circle cx="990.9" cy="490.5" r="1.4" fill="#ddd"/>
<circle cx="996.6" cy="525.6" r="1.4" fill="#ddd"/>
<!-- axes -->
<line x1="792.2" y1="628.3" x2="792.2" y2="587" stroke="#3a70b8" stroke-width="1"/>
<line x1="792.2" y1="628.3" x2="757" y2="648.3" stroke="#b04040" stroke-width="1.1"/>
<line x1="792.2" y1="628.3" x2="827.7" y2="648.6" stroke="#2a9a2a" stroke-width="1.1"/>
<text x="792.2" y="581.4" font-family="Liberation Sans" font-size="14.5" fill="#3a78c8" text-anchor="middle">S</text>
<text x="757.7" y="642.1" font-family="Liberation Sans" font-size="14.5" fill="#c84040" text-anchor="middle">R</text>
<text x="827.4" y="642.1" font-family="Liberation Sans" font-size="14.5" fill="#22a022" text-anchor="middle">A</text>
<!-- scale bar -->
<rect x="1047" y="643.4" width="148" height="27.5" rx="4" fill="#121212" opacity="0.9"/>
<rect x="1051" y="647.6" width="139" height="3.8" fill="#e2e2e2"/>

</svg>

<span class="t" style="left:501.70px;top:145.00px;font-size:19.5px;line-height:22px;color:#ffff00;transform:scaleX(1.0149);transform-origin:0 0;font-weight:normal;">A</span>
<span class="t" style="left:502.70px;top:338.00px;font-size:19.5px;line-height:22px;color:#ffff00;transform:scaleX(0.8842);transform-origin:0 0;font-weight:normal;">P</span>
<span class="t" style="left:404.80px;top:241.00px;font-size:19.5px;line-height:22px;color:#ffff00;transform:scaleX(0.9376);transform-origin:0 0;font-weight:normal;">R</span>
<span class="t" style="left:603.60px;top:241.00px;font-size:19.5px;line-height:22px;color:#ffff00;transform:scaleX(0.8486);transform-origin:0 0;font-weight:normal;">L</span>
<span class="t" style="left:665.00px;top:339.70px;font-size:19px;line-height:21px;color:#e4e4e4;transform:scaleX(0.9070);transform-origin:0 0;font-weight:normal;">216/431</span>
<span class="t" style="left:962.00px;top:145.00px;font-size:19.5px;line-height:22px;color:#ffff00;transform:scaleX(0.8919);transform-origin:0 0;font-weight:normal;">S</span>
<div class="b" style="left:963.5px;top:343px;width:2.3px;height:13.2px;background:#ffff00;border-radius:0.5px;"></div>
<span class="t" style="left:888.20px;top:241.00px;font-size:19.5px;line-height:22px;color:#ffff00;transform:scaleX(1.0149);transform-origin:0 0;font-weight:normal;">A</span>
<span class="t" style="left:1039.30px;top:241.00px;font-size:19.5px;line-height:22px;color:#ffff00;transform:scaleX(0.8842);transform-origin:0 0;font-weight:normal;">P</span>
<span class="t" style="left:1127.80px;top:339.70px;font-size:19px;line-height:21px;color:#e4e4e4;transform:scaleX(0.8888);transform-origin:0 0;font-weight:normal;">156/311</span>
<span class="t" style="left:501.50px;top:422.60px;font-size:19.5px;line-height:22px;color:#ffff00;transform:scaleX(0.8534);transform-origin:0 0;font-weight:normal;">S</span>
<div class="b" style="left:502.4px;top:621.4px;width:2.3px;height:13.2px;background:#ffff00;border-radius:0.5px;"></div>
<span class="t" style="left:428.20px;top:519.60px;font-size:19.5px;line-height:22px;color:#ffff00;transform:scaleX(0.8665);transform-origin:0 0;font-weight:normal;">R</span>
<span class="t" style="left:580.30px;top:519.60px;font-size:19.5px;line-height:22px;color:#ffff00;transform:scaleX(0.7286);transform-origin:0 0;font-weight:normal;">L</span>
<span class="t" style="left:667.40px;top:618.80px;font-size:19px;line-height:21px;color:#e4e4e4;transform:scaleX(0.8992);transform-origin:0 0;font-weight:normal;">156/311</span>
<div class="b" style="left:0px;top:677px;width:1199px;height:1px;background:#cfcfcf;"></div>
<div class="b" style="left:0px;top:678px;width:1199px;height:22px;background:#e6e6e6;"></div>
<div class="b" style="left:281px;top:677px;width:1.3px;height:23px;background:#9a9a9a;"></div>
<svg style="left:6px;top:681px" width="14" height="16" viewBox="6 681 14 16"><rect x="8.2" y="683.2" width="2.2" height="11.8" fill="#8f8f8f"/><path d="M17.6 683.2 V695 L10.8 689.1 Z" fill="#8f8f8f"/></svg>
<svg style="left:1058px;top:679px" width="22" height="20" viewBox="1058 679 22 20">
<path d="M1068.6 681.6 L1076 685 L1068.6 688.4 L1061.2 685 Z" fill="#fde98a" stroke="#a08a40" stroke-width="0.8"/>
<path d="M1061.2 685 L1068.6 688.4 V696 L1061.2 692.6 Z" fill="#b8dcf8" stroke="#3a7cc8" stroke-width="0.9"/>
<path d="M1076 685 L1068.6 688.4 V696 L1076 692.6 Z" fill="#c8f0b8" stroke="#40a840" stroke-width="0.9"/>
</svg>
<span class="t" style="left:1081.90px;top:682.20px;font-size:12.3px;line-height:14px;color:#3c3c3c;transform:scaleX(0.9663);transform-origin:0 0;font-weight:normal;">Volume Session (3-D)</span>
<span class="t" style="left:1095.50px;top:655.20px;font-size:12.5px;line-height:14px;color:#e0e0e0;transform:scaleX(1.0695);transform-origin:0 0;font-weight:bold;">500 mm</span>
<div class="b" style="left:281px;top:121px;width:1.4px;height:579px;background:#9a9a9a;"></div>
<div class="b" style="left:741px;top:121px;width:1.4px;height:556px;background:#9a9a9a;"></div>
<div class="b" style="left:0px;top:0px;width:1.2px;height:700px;background:#2b2722;"></div>
<div class="b" style="left:0px;top:698.8px;width:1199px;height:1.2px;background:#1e1e1e;"></div>
<svg style="left:0;top:690px" width="12" height="10" viewBox="0 690 12 10"><path d="M0 690 V700 H10 Q1.2 699 1.2 690 Z" fill="#1e1e1e"/></svg>
<svg style="left:1187px;top:690px" width="12" height="10" viewBox="1187 690 12 10"><path d="M1199 693 V700 H1191 Q1198 699 1199 693 Z" fill="#1e1e1e"/></svg>
</body></html>
